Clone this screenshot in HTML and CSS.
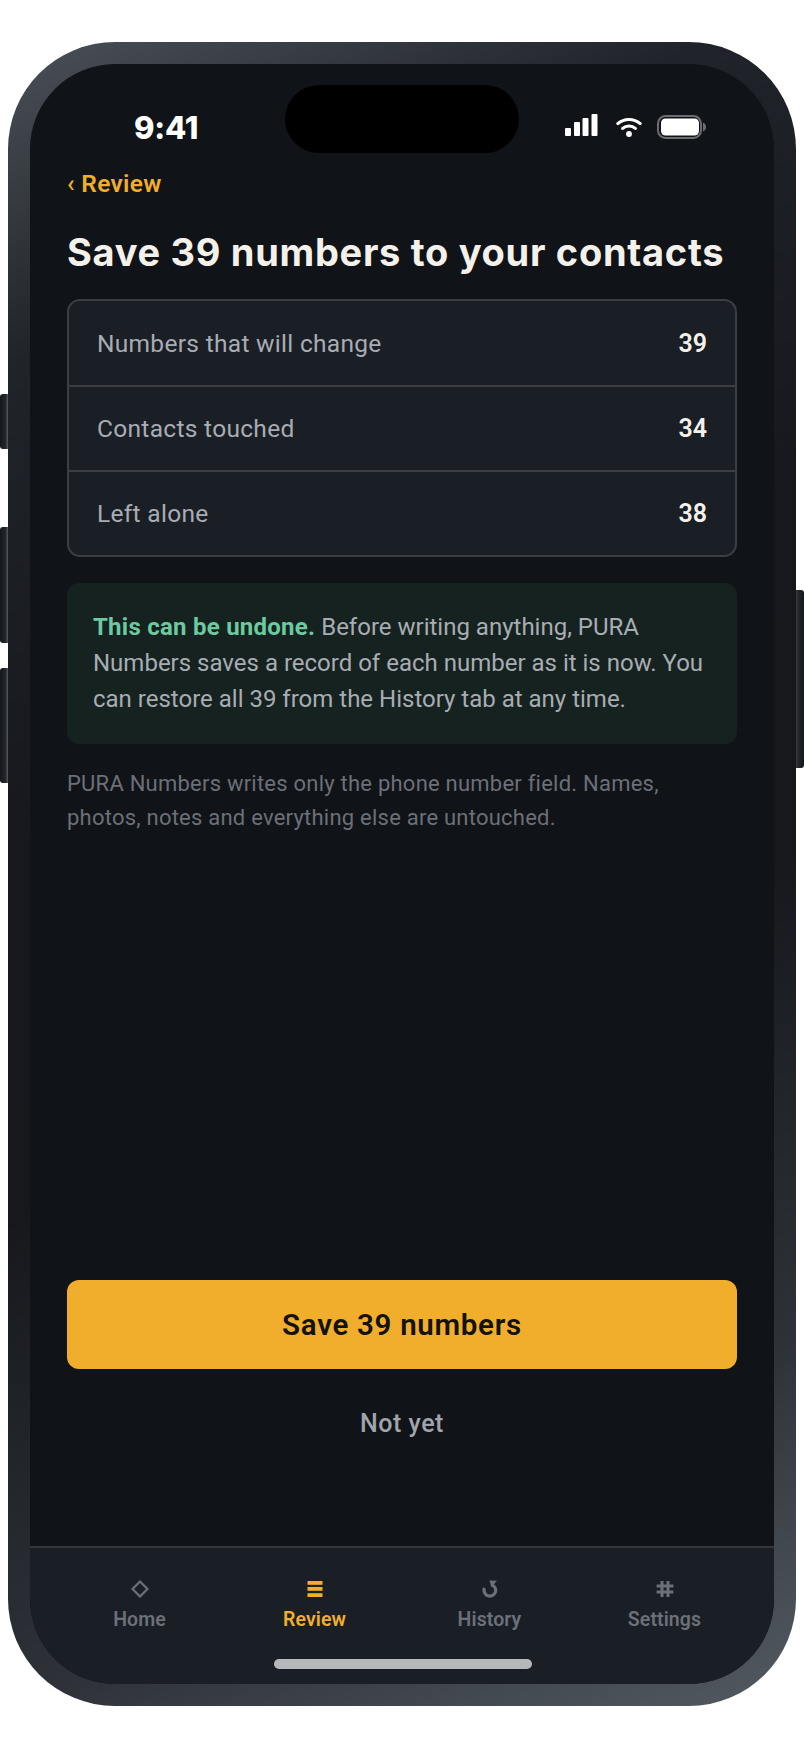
FILE: index.html
```html
<!DOCTYPE html>
<html lang="en">
<head>
<meta charset="utf-8">
<title>Save numbers</title>
<link rel="stylesheet" href="styles.css">
</head>
<body>
<div class="stage">
  <div class="phone">
    <span class="btn btn-silent"></span>
    <span class="btn btn-up"></span>
    <span class="btn btn-down"></span>
    <span class="btn btn-power"></span>
    <div class="screen">
      <div class="island"></div>
      <header class="status">
        <span class="time">9:41</span>
        <div class="status-icons">
          <svg class="signal" width="33" height="22" viewBox="0 0 33 22"><g fill="#fff"><rect x="0" y="14" width="6" height="8" rx="1"/><rect x="9" y="8" width="6" height="14" rx="1"/><rect x="17.5" y="4" width="6" height="18" rx="1"/><rect x="26.5" y="0" width="6" height="22" rx="1"/></g></svg>
          <svg class="wifi" width="26" height="20" viewBox="0 0 26 20"><g fill="none" stroke="#fff" stroke-width="3" stroke-linecap="round"><path d="M1.8 6.6C8 1 18 1 24.2 6.6"/><path d="M6.6 11.4C10.2 8.2 15.8 8.2 19.4 11.4"/></g><circle cx="13" cy="17" r="2.9" fill="#fff"/></svg>
          <svg class="battery" width="49" height="24" viewBox="0 0 49 24"><rect x="1" y="1" width="43" height="22" rx="7.5" fill="none" stroke="#6b6d70" stroke-width="2"/><rect x="4" y="3.5" width="38" height="17" rx="4.5" fill="#fff"/><path d="M46 7.5c1.8.6 3 2.4 3 4.5s-1.200 3.900-3 4.500z" fill="#6b6d70"/></svg>
        </div>
      </header>
      <main class="content">
        <a class="back">‹ Review</a>
        <h1 class="title">Save 39 numbers to your contacts</h1>
        <section class="summary">
          <div class="row"><span class="row-label label-a">Numbers that will change</span><span class="row-value">39</span></div>
          <div class="row"><span class="row-label label-a">Contacts touched</span><span class="row-value">34</span></div>
          <div class="row"><span class="row-label label-a">Left alone</span><span class="row-value">38</span></div>
        </section>
        <section class="undo">
          <p><strong>This can be undone.</strong> Before writing anything, PURA Numbers saves a record of each number as it is now. You can restore all 39 from the History tab at any time.</p>
        </section>
        <p class="note">PURA Numbers writes only the phone number field. Names, photos, notes and everything else are untouched.</p>
        <div class="actions">
          <button class="primary">Save 39 numbers</button>
          <button class="secondary">Not yet</button>
        </div>
      </main>
      <nav class="tabs">
        <div class="tab">
          <svg width="18" height="18" viewBox="0 0 18 18"><path d="M9 1.500 16.500 9 9 16.500 1.500 9z" fill="none" stroke="currentColor" stroke-width="2.200"/></svg>
          <span>Home</span>
        </div>
        <div class="tab active">
          <svg width="18" height="18" viewBox="0 0 18 18"><g fill="currentColor"><rect x="1.500" y="1" width="15" height="3.800"/><rect x="1.500" y="7" width="15" height="3.800"/><rect x="1.500" y="13.200" width="15" height="3.800"/></g></svg>
          <span>Review</span>
        </div>
        <div class="tab">
          <svg width="18" height="18" viewBox="0 0 18 18"><path d="M10 4.600A5.800 5.800 0 1 1 3.500 8" fill="none" stroke="currentColor" stroke-width="3.200"/><path d="M8.400.4 16 .8 10.400 7z" fill="currentColor"/></svg>
          <span>History</span>
        </div>
        <div class="tab">
          <svg width="18" height="18" viewBox="0 0 18 18"><path d="M6 1v16M12 1v16M.6 6h16.800M.6 12h16.800" fill="none" stroke="currentColor" stroke-width="3"/></svg>
          <span>Settings</span>
        </div>
        <div class="home-bar"></div>
      </nav>
    </div>
  </div>
</div>
</body>
</html>
```
FILE: styles.css
```css
* { box-sizing: border-box; }
html, body { margin: 0; padding: 0; background: #fff; }
.stage { padding: 42px 8px; height: 1748px; }
.phone {
  position: relative;
  width: 788px;
  height: 1664px;
  padding: 22px;
  border-radius: 107px;
  background: linear-gradient(155deg, #4b5058 0%, #202329 16%, #16181d 40%, #16181c 58%, #2e3238 82%, #535a62 100%);
}
.btn {
  position: absolute;
  width: 8px;
  background: linear-gradient(90deg, #14171b 0%, #23262b 70%, #5a5d62 100%);
  border-radius: 3px 0 0 3px;
}
.btn-silent { left: -8px; top: 352px; height: 55px; }
.btn-up { left: -8px; top: 485px; height: 116px; }
.btn-down { left: -8px; top: 626px; height: 115px; }
.btn-power {
  right: -8px; top: 548px; height: 178px;
  border-radius: 0 3px 3px 0;
  background: linear-gradient(270deg, #14171b 0%, #23262b 70%, #3a3d42 100%);
}
.screen {
  position: relative;
  display: flex;
  flex-direction: column;
  width: 744px;
  height: 1620px;
  border-radius: 85px;
  overflow: hidden;
  background: #101317;
  font-family: Roboto, "Liberation Sans", sans-serif;
}
.island {
  position: absolute;
  left: 255px; top: 21px;
  width: 234px; height: 68px;
  border-radius: 34px;
  background: #000;
}
.status {
  height: 96px;
  flex: none;
  display: flex;
  align-items: flex-start;
  justify-content: space-between;
  padding: 50px 68px 0 104px;
}
.time {
  font-family: Inter, sans-serif;
  font-weight: 800;
  font-size: 31px;
  line-height: 28px;
  color: #fff;
  letter-spacing: -0.2px;
}
.status-icons { display: flex; align-items: flex-start; }
.signal { margin-top: 0; }
.wifi { margin: 3px 15px 0 18px; }
.battery { margin-top: 1px; }
.content {
  flex: 1;
  display: flex;
  flex-direction: column;
  padding: 0 37px;
  min-height: 0;
}
.back {
  font-weight: 600;
  font-size: 24.500px;
  line-height: 28px;
  margin-top: 10px;
  color: #f0ae2c;
  letter-spacing: 0.3px;
}
.title {
  margin: 31px 0 0;
  font-family: Inter, sans-serif;
  font-weight: 700;
  font-size: 38px;
  line-height: 46px;
  letter-spacing: 0.7px;
  color: #f3f1ea;
  white-space: nowrap;
}
.summary {
  margin-top: 24px;
  border: 2px solid #3b3e43;
  border-radius: 13px;
  background: #1a1e25;
  overflow: hidden;
}
.row {
  display: flex;
  justify-content: space-between;
  align-items: center;
  height: 85px;
  padding: 0 28px;
  border-top: 2px solid #3b3e43;
}
.row:first-child { border-top: 0; height: 84px; }
.row:last-child { height: 85px; }
.row-label { font-size: 24.500px; letter-spacing: 0.3px; color: #a8acb3; }
.row-value { font-size: 25px; font-weight: 600; color: #f3f1ea; }
.undo {
  margin-top: 26px;
  padding: 26px 26px 27px;
  border-radius: 12px;
  background: #15221f;
  color: #a8acb3;
  font-size: 24px;
  line-height: 36px;
}
.undo p { margin: 0; }
.undo strong { font-weight: 700; letter-spacing: 0.25px; color: #6dc9a0; }
.note {
  margin: 23px 0 0;
  padding-right: 20px;
  font-size: 22px;
  line-height: 33.500px;
  letter-spacing: 0.23px;
  color: #6b7079;
}
.actions {
  margin-top: auto;
  display: flex;
  flex-direction: column;
  padding-bottom: 96px;
}
.primary {
  height: 89px;
  border: 0;
  border-radius: 12px;
  background: #f0ae2c;
  color: #14120c;
  font-family: inherit;
  font-size: 29.500px;
  font-weight: 600;
  letter-spacing: 0.7px;
}
.secondary {
  height: 54px;
  margin-top: 27px;
  border: 0;
  background: none;
  color: #a0a4ad;
  font-family: inherit;
  font-size: 25px;
  font-weight: 500;
  letter-spacing: 0.5px;
}
.tabs {
  position: relative;
  flex: none;
  height: 138px;
  display: grid;
  grid-template-columns: repeat(4, 175px);
  justify-content: center;
  padding-top: 32px;
  border-top: 2px solid #33363b;
  background: #1a1e25;
}
.tab {
  display: flex;
  flex-direction: column;
  align-items: center;
  gap: 10px;
  color: #6b7079;
  font-size: 19.500px;
  font-weight: 600;
  line-height: 24px;
  letter-spacing: 0.1px;
}
.tab svg { display: block; }
.tab.active { color: #f0ae2c; }
.home-bar {
  position: absolute;
  left: 244px; bottom: 15px;
  width: 258px; height: 10px;
  border-radius: 5px;
  background: #b5b8bb;
}
```
